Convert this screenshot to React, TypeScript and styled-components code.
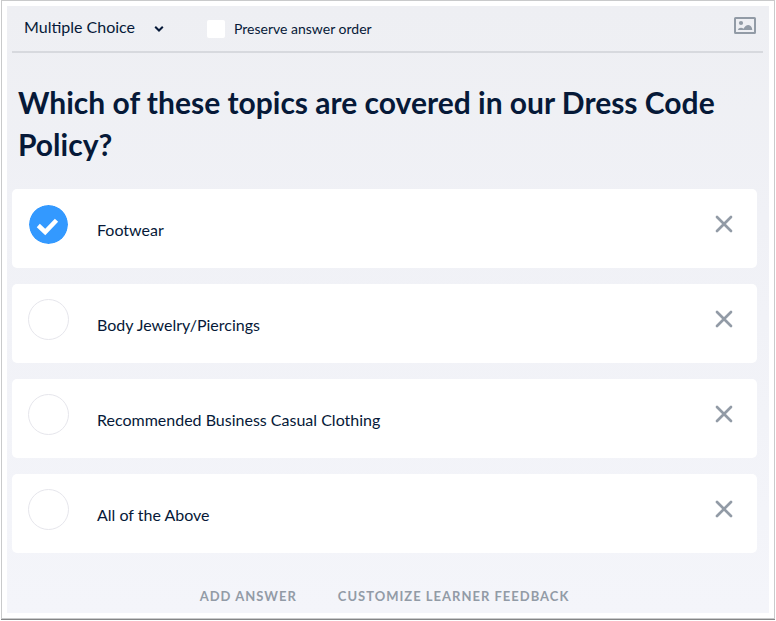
import React, { useState } from "react";
import styled, { createGlobalStyle } from "styled-components";

const GlobalStyle = createGlobalStyle`
  *, *::before, *::after { box-sizing: border-box; }
  body {
    margin: 0;
    background: #fff;
    color: #061938;
    font-family: Lato, "Open Sans", sans-serif;
  }
  button, select, input { font: inherit; color: inherit; }
`;

const Frame = styled.div`
  margin: 1px 2px 2px;
  padding: 5px;
  background: #fff;
  box-shadow: 0 0 0 1px #c9cacb, 0 1px 0 1px #858687;
`;

const Panel = styled.main`
  padding: 0 6px 0 5px;
  background: linear-gradient(#eeeff3, #f0f1f6 35%, #f4f5fa);
`;

const Toolbar = styled.header`
  display: flex;
  align-items: center;
  height: 47px;
  padding: 0 7px 4px 12px;
  border-bottom: 2px solid #d7d9de;
`;

const TypePicker = styled.div`
  display: grid;
  align-items: center;
  width: 143px;
  margin-right: 40px;
  svg {
    grid-area: 1 / 1;
    justify-self: end;
    margin: 4px 3px 0 0;
    pointer-events: none;
  }
`;

const TypeSelect = styled.select`
  grid-area: 1 / 1;
  width: 100%;
  height: 24px;
  padding: 0;
  border: 0;
  appearance: none;
  background: transparent;
  font-size: 16px;
`;

const OrderOption = styled.label`
  display: flex;
  align-items: center;
  gap: 9px;
  font-size: 14px;
  line-height: 20px;
  margin-top: 4px;
`;

const Checkbox = styled.input`
  appearance: none;
  width: 18px;
  height: 18px;
  margin: 0;
  border-radius: 2px;
  background: #fff;
  &:checked { background: #3399ff; box-shadow: inset 0 0 0 3px #fff; }
`;

const IconButton = styled.button`
  display: flex;
  flex: none;
  padding: 0;
  border: 0;
  background: transparent;
  cursor: pointer;
`;

const ImageButton = styled(IconButton)`
  margin: 0 0 2px auto;
`;

const Question = styled.h1`
  margin: 0;
  padding: 28px 6px 24px;
  font-size: 30px;
  font-weight: 700;
  line-height: 42px;
`;

const AnswerList = styled.ul`
  display: grid;
  gap: 16px;
  margin: 0 6px 0 0;
  padding: 0;
  list-style: none;
`;

const AnswerCard = styled.li`
  display: flex;
  align-items: flex-start;
  min-height: 79px;
  padding: 15px 24px 0 16px;
  border-radius: 5px;
  background: #fff;
`;

const AnswerLabel = styled.label`
  display: flex;
  flex: 1;
  gap: 28px;
  font-size: 16px;
  line-height: 24px;
  span { margin-top: 14px; }
`;

const Mark = styled.div`
  display: grid;
  width: 41px;
  height: 41px;
  svg { grid-area: 1 / 1; pointer-events: none; }
`;

const MarkInput = styled.input`
  grid-area: 1 / 1;
  appearance: none;
  width: 41px;
  height: 41px;
  margin: 0;
  border: 1px solid #e6e6ec;
  border-radius: 50%;
  background: #fff;
  &:checked { border-color: #fff; background: #3399ff; background-clip: padding-box; }
`;

const RemoveButton = styled(IconButton)`
  margin-top: 11px;
`;

const Actions = styled.footer`
  display: flex;
  justify-content: center;
  gap: 41px;
  padding: 33px 6px 7px 0;
`;

const ActionButton = styled.button`
  padding: 0;
  border: 0;
  background: transparent;
  color: #929ba6;
  font-size: 13px;
  font-weight: 700;
  line-height: 20px;
  letter-spacing: 1px;
  text-transform: uppercase;
  cursor: pointer;
`;

const ChevronIcon = () => (
  <svg width="10" height="8" viewBox="0 0 10 8" fill="none" aria-hidden="true">
    <path d="M1.200 1.700 5 5.500 8.800 1.700" stroke="#061938" strokeWidth="2" />
  </svg>
);

const PictureIcon = () => (
  <svg width="22" height="17" viewBox="0 0 22 17" aria-hidden="true">
    <rect x="1" y="1" width="20" height="15" rx="0.5" fill="none" stroke="#929ba6" strokeWidth="2" />
    <circle cx="7" cy="6" r="2.1" fill="#929ba6" />
    <path d="M4 13c.2-1.5 1.500-2.200 3-2.200 1 0 1.800.3 2.500.9C10.700 9.700 12.300 8 14.400 8c2.300 0 3.700 2.300 3.900 5z" fill="#929ba6" />
  </svg>
);

const CheckIcon = () => (
  <svg width="41" height="41" viewBox="0 0 41 41" fill="none" aria-hidden="true">
    <path d="m10.300 21.500 6.900 6.500 11.300-11.800" stroke="#fff" strokeWidth="4.500" />
  </svg>
);

const CrossIcon = () => (
  <svg width="18" height="18" viewBox="0 0 18 18" fill="none" aria-hidden="true">
    <path d="m2 2 14 14M16 2 2 16" stroke="#929ba6" strokeWidth="2.700" strokeLinecap="round" />
  </svg>
);

interface Answer {
  text: string;
  correct: boolean;
}

const initialAnswers: Answer[] = [
  { text: "Footwear", correct: true },
  { text: "Body Jewelry/Piercings", correct: false },
  { text: "Recommended Business Casual Clothing", correct: false },
  { text: "All of the Above", correct: false },
];

export default function App() {
  const [answers, setAnswers] = useState(initialAnswers);

  const toggle = (index: number) =>
    setAnswers(answers.map((a, i) => (i === index ? { ...a, correct: !a.correct } : a)));
  const remove = (index: number) => setAnswers(answers.filter((_, i) => i !== index));

  return (
    <>
      <GlobalStyle />
      <Frame>
        <Panel>
          <Toolbar>
            <TypePicker>
              <TypeSelect aria-label="Question type">
                <option>Multiple Choice</option>
              </TypeSelect>
              <ChevronIcon />
            </TypePicker>
            <OrderOption>
              <Checkbox type="checkbox" />
              Preserve answer order
            </OrderOption>
            <ImageButton type="button" aria-label="Add image">
              <PictureIcon />
            </ImageButton>
          </Toolbar>
          <Question>Which of these topics are covered in our Dress Code Policy?</Question>
          <AnswerList>
            {answers.map((answer, index) => (
              <AnswerCard key={answer.text}>
                <AnswerLabel>
                  <Mark>
                    <MarkInput type="checkbox" checked={answer.correct} onChange={() => toggle(index)} />
                    {answer.correct && <CheckIcon />}
                  </Mark>
                  <span>{answer.text}</span>
                </AnswerLabel>
                <RemoveButton type="button" aria-label={`Remove ${answer.text}`} onClick={() => remove(index)}>
                  <CrossIcon />
                </RemoveButton>
              </AnswerCard>
            ))}
          </AnswerList>
          <Actions>
            <ActionButton type="button">Add answer</ActionButton>
            <ActionButton type="button">Customize learner feedback</ActionButton>
          </Actions>
        </Panel>
      </Frame>
    </>
  );
}
